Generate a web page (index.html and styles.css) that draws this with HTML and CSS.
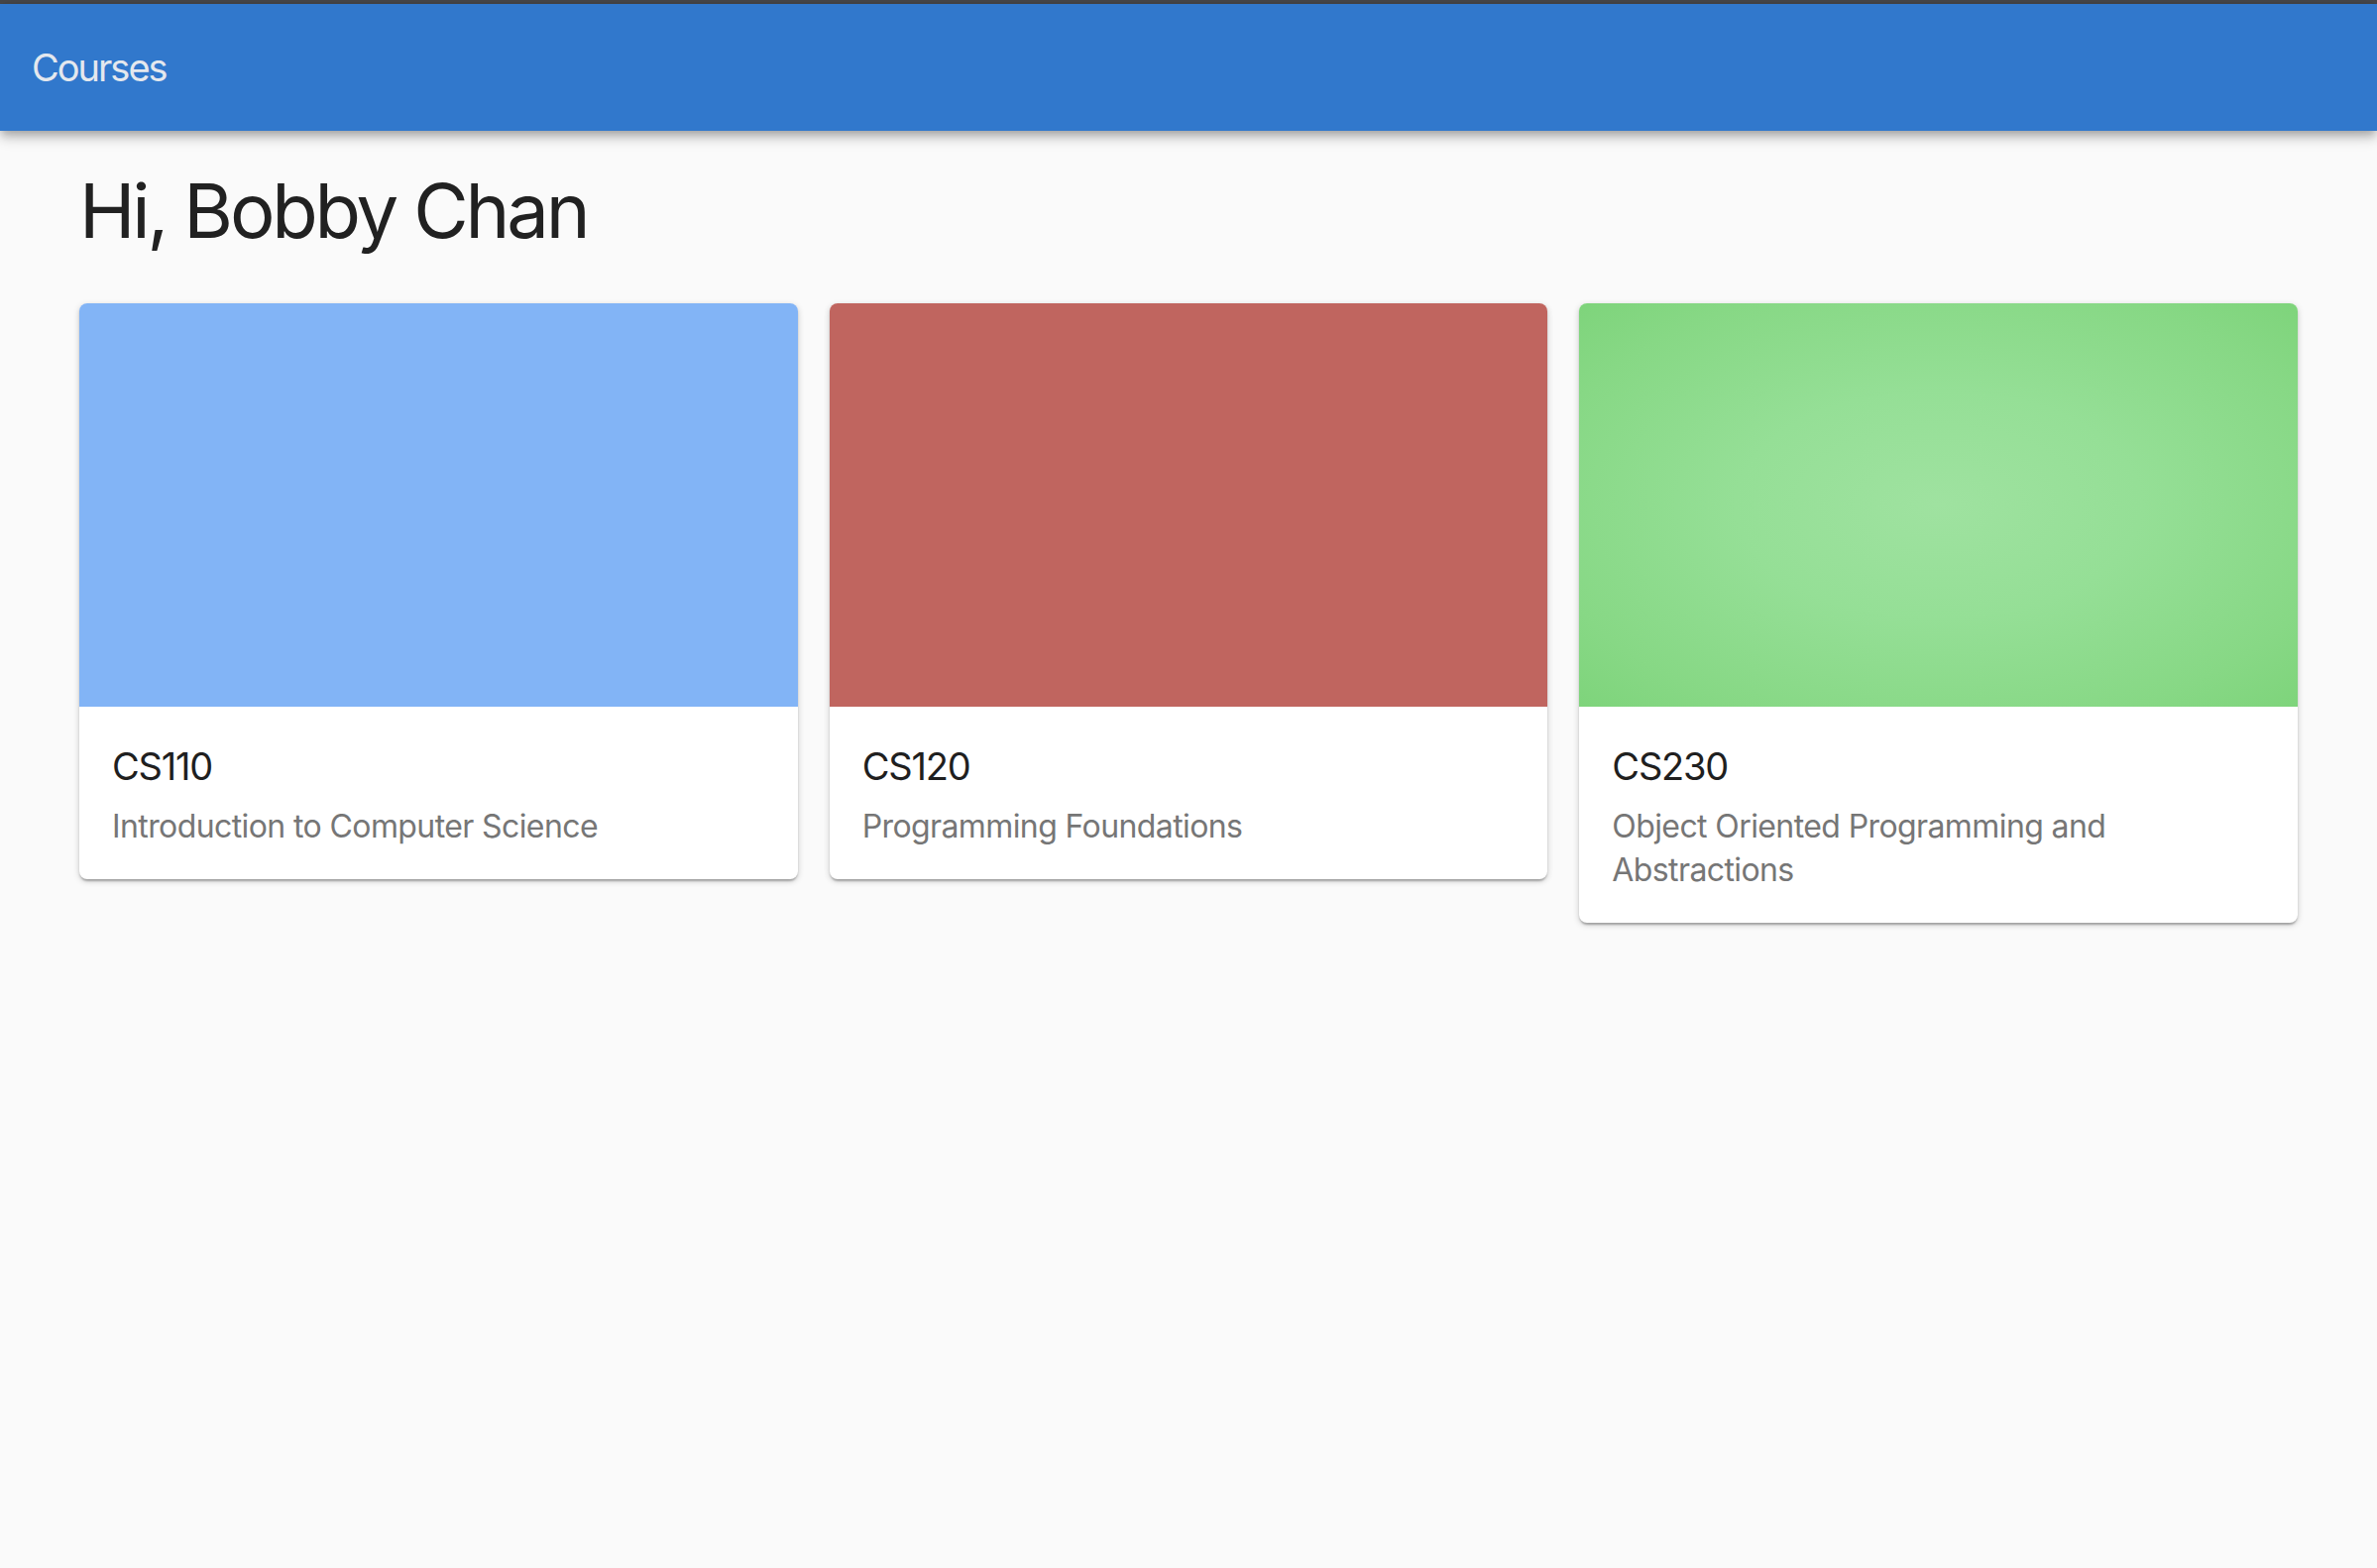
FILE: index.html
```html
<!DOCTYPE html>
<html lang="en">
<head>
<meta charset="utf-8">
<title>Courses</title>
<link rel="stylesheet" href="styles.css">
</head>
<body>
<div class="topstrip"></div>
<header class="appbar">
  <span class="appbar-title">Courses</span>
</header>
<main class="content">
  <h1 class="greeting">Hi, Bobby Chan</h1>
  <div class="cards">
    <article class="card">
      <div class="media media-blue"></div>
      <div class="card-body">
        <h2 class="card-title">CS110</h2>
        <p class="card-desc">Introduction to Computer Science</p>
      </div>
    </article>
    <article class="card">
      <div class="media media-red"></div>
      <div class="card-body">
        <h2 class="card-title">CS120</h2>
        <p class="card-desc">Programming Foundations</p>
      </div>
    </article>
    <article class="card">
      <div class="media media-green"></div>
      <div class="card-body">
        <h2 class="card-title">CS230</h2>
        <p class="card-desc">Object Oriented Programming and Abstractions</p>
      </div>
    </article>
  </div>
</main>
</body>
</html>
```

FILE: styles.css
```css
html, body {
  margin: 0;
  padding: 0;
}
body {
  background: #fafafa;
  font-family: Inter, "Noto Sans", "Liberation Sans", sans-serif;
  color: #212121;
  min-height: 1582px;
}
.topstrip {
  height: 4px;
  background: #474749;
}
.appbar {
  position: relative;
  z-index: 2;
  height: 128px;
  background: #3178cc;
  display: flex;
  align-items: center;
  padding-left: 32px;
  box-shadow: 0 4px 8px -2px rgba(0,0,0,0.2), 0 8px 10px 0 rgba(0,0,0,0.14), 0 2px 20px 0 rgba(0,0,0,0.12);
}
.appbar-title {
  font-size: 38px;
  font-weight: 400;
  color: #e4e8ee;
  line-height: 1;
  letter-spacing: -2px;
}
.content {
  padding: 0 80px;
}
.greeting {
  margin: 34px 0 47px 0;
  font-size: 76px;
  font-weight: 400;
  line-height: 93px;
  color: #212121;
  letter-spacing: -3.2px;
}
.cards {
  display: grid;
  grid-template-columns: repeat(3, 1fr);
  gap: 32px;
  align-items: start;
}
.card {
  background: #fff;
  border-radius: 8px;
  overflow: hidden;
  box-shadow: 0 2px 6px rgba(0,0,0,0.2), 0 2px 2px rgba(0,0,0,0.14), 0 4px 2px -2px rgba(0,0,0,0.12);
}
.media {
  height: 407px;
}
.media-blue {
  background: #82b4f6;
}
.media-red {
  background: #c0655f;
}
.media-green {
  background: radial-gradient(ellipse at 50% 50%, #9fe2a0 0%, #95df96 40%, #87d885 80%, #7ed47b 100%);
}
.card-body {
  padding: 35px 32px 31px 33px;
}
.card-title {
  margin: 0 0 14px 0;
  font-size: 38px;
  font-weight: 400;
  line-height: 50px;
  color: #1f1f1f;
  letter-spacing: -1.2px;
}
.card-desc {
  margin: 0;
  font-size: 32px;
  line-height: 44px;
  color: #767676;
  letter-spacing: -0.6px;
}
```
